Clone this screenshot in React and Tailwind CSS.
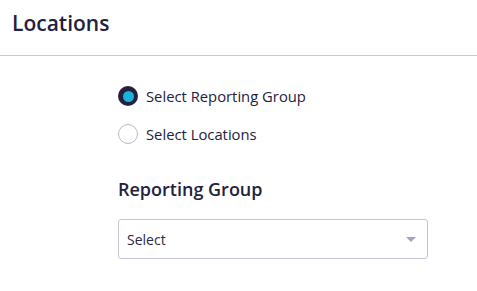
export default function App() {
  return (
    <div className="w-[477px] h-[291px] bg-white text-[#23213d] font-['Open_Sans',sans-serif]">
      <div className="h-[56px] border-b border-[#c9c6da] flex items-center px-3">
        <h1 className="text-[21px] font-semibold leading-none -mt-[8px]">Locations</h1>
      </div>

      <div className="pl-[118px] pt-[30px]">
        <label className="flex items-center gap-[8px] h-[20px]">
          <span className="w-[20px] h-[20px] rounded-full bg-[#23213d] flex items-center justify-center">
            <span className="w-[11px] h-[11px] rounded-full bg-[#1ab3db]" />
          </span>
          <span className="text-[14.8px]">Select Reporting Group</span>
        </label>

        <label className="flex items-center gap-[8px] h-[20px] mt-[18px]">
          <span className="w-[20px] h-[20px] rounded-full border border-[#b9b7c8] bg-white" />
          <span className="text-[14.8px]">Select Locations</span>
        </label>

        <h2 className="text-[18px] font-semibold leading-none mt-[36px]">Reporting Group</h2>

        <div className="mt-[21px] w-[310px] h-[40px] border border-[#c5c2dc] rounded-[3px] flex items-center justify-between pl-[8px] pr-[11px]">
          <span className="text-[14px] text-[#2b2946]">Select</span>
          <span className="w-0 h-0 border-l-[5px] border-r-[5px] border-t-[5px] border-l-transparent border-r-transparent border-t-[#a7a4c0]" />
        </div>
      </div>
    </div>
  );
}
